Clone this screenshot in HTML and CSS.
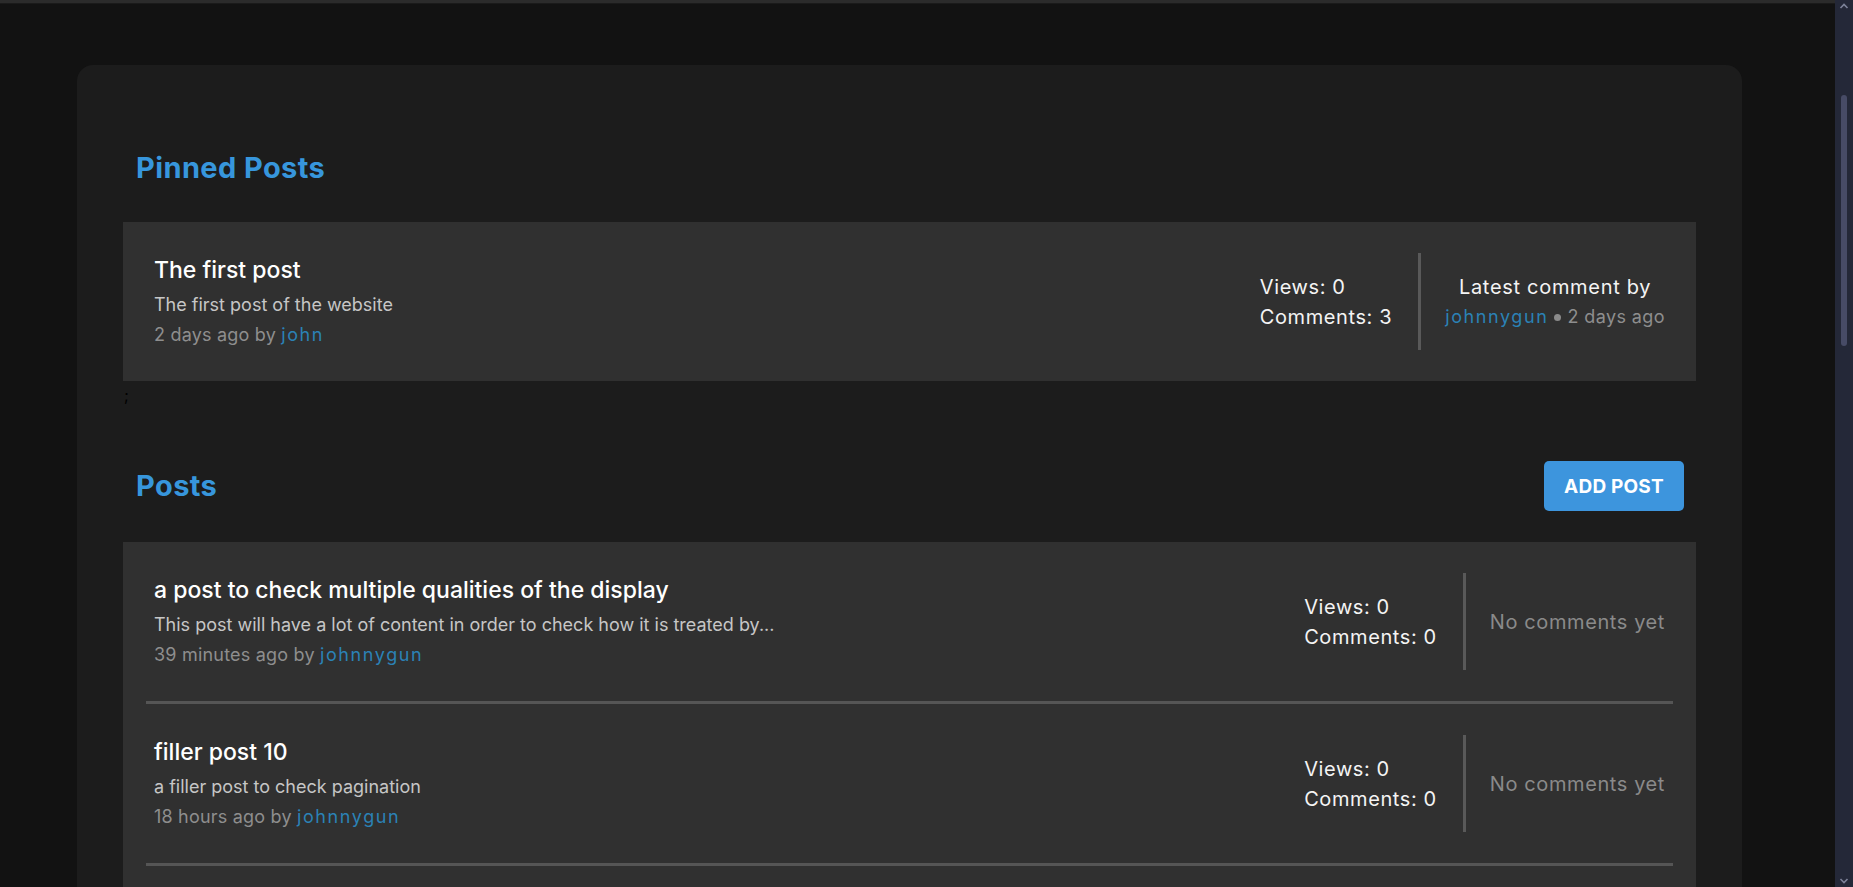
FILE: index.html
```html
<!DOCTYPE html>
<html lang="en">
<head>
<meta charset="utf-8">
<title>Forum</title>
<link rel="stylesheet" href="styles.css">
</head>
<body>
<div class="screen">
  <main class="viewport">
    <div class="topbar"></div>
    <div class="panel">
      <h2 class="section-title pinned-title">Pinned Posts</h2>
      <div class="pinned">
        <article class="post">
          <div class="post-main">
            <h3 class="post-title">The first post</h3>
            <p class="post-desc">The first post of the website</p>
            <p class="post-meta">2 days ago by <a class="user">john</a></p>
          </div>
          <div class="post-side">
            <div class="stats"><span>Views: 0</span><span>Comments: 3</span></div>
            <div class="latest">
              <span class="latest-label">Latest comment by</span>
              <span class="latest-meta"><a class="user">johnnygun</a><i class="dot"></i>2 days ago</span>
            </div>
          </div>
        </article>
      </div>
      <div class="stray">;</div>
      <div class="posts-head">
        <h2 class="section-title">Posts</h2>
        <button class="add-btn">ADD POST</button>
      </div>
      <div class="post-list">
        <article class="post post-row">
          <div class="post-main">
            <h3 class="post-title">a post to check multiple qualities of the display</h3>
            <p class="post-desc">This post will have a lot of content in order to check how it is treated by...</p>
            <p class="post-meta">39 minutes ago by <a class="user">johnnygun</a></p>
          </div>
          <div class="post-side">
            <div class="stats"><span>Views: 0</span><span>Comments: 0</span></div>
            <div class="latest"><span class="no-comments">No comments yet</span></div>
          </div>
        </article>
        <article class="post post-row">
          <div class="post-main">
            <h3 class="post-title">filler post 10</h3>
            <p class="post-desc">a filler post to check pagination</p>
            <p class="post-meta">18 hours ago by <a class="user">johnnygun</a></p>
          </div>
          <div class="post-side">
            <div class="stats"><span>Views: 0</span><span>Comments: 0</span></div>
            <div class="latest"><span class="no-comments">No comments yet</span></div>
          </div>
        </article>
      </div>
    </div>
  </main>
  <div class="scrollbar">
    <svg class="sb-arrow" width="18" height="12" viewBox="0 0 18 12"><polyline points="5.5,8 9,4.5 12.5,8" fill="none" stroke="#7d8299" stroke-width="1.6"/></svg>
    <div class="sb-thumb"></div>
    <div class="sb-fill"></div>
    <svg class="sb-arrow" width="18" height="12" viewBox="0 0 18 12"><polyline points="5.5,4 9,7.5 12.5,4" fill="none" stroke="#7d8299" stroke-width="1.6"/></svg>
  </div>
</div>
</body>
</html>
```

FILE: styles.css
```css
* { box-sizing: border-box; }

html, body {
  margin: 0;
  padding: 0;
  height: 100%;
  background: #121212;
  font-family: Inter, "Noto Sans", sans-serif;
  color: #f2f2f2;
}

.screen {
  display: flex;
  height: 887px;
  overflow: hidden;
}

.viewport {
  flex: 1;
  min-width: 0;
  overflow: hidden;
  background: #121212;
}

.topbar {
  height: 4px;
  background: #2b2b2b;
  border-bottom: 1px solid #1a1a1a;
}

.panel {
  margin: 61px 0 0 77px;
  width: 1665px;
  min-height: 900px;
  padding: 83px 46px 0;
  background: #1c1c1c;
  border-radius: 16px 16px 0 0;
}

.section-title {
  margin: 0;
  font-size: 29px;
  line-height: 40px;
  font-weight: 700;
  color: #3796dc;
  letter-spacing: 0.4px;
}

.pinned-title {
  padding-left: 13px;
  margin-bottom: 34px;
}

.pinned .post {
  padding: 31px;
  background: #303030;
}

.post {
  display: flex;
  align-items: stretch;
}

.post-main {
  flex: 1;
  min-width: 0;
}

.post-title {
  margin: 0;
  font-size: 23px;
  line-height: 34px;
  font-weight: 500;
  color: #ffffff;
}

.post-desc {
  margin: 3px 0 0;
  font-size: 18px;
  line-height: 30px;
  color: #c6c6c6;
}

.post-meta {
  margin: 0;
  font-size: 18px;
  line-height: 30px;
  color: #8e8e8e;
  letter-spacing: 0.2px;
}

.user {
  color: #2b82b6;
  text-decoration: none;
  letter-spacing: 1.6px;
}

.post-side {
  display: flex;
  align-items: stretch;
}

.stats {
  display: flex;
  flex-direction: column;
  justify-content: center;
  padding-right: 26px;
  font-size: 20px;
  line-height: 30px;
  color: #f4f4f4;
  letter-spacing: 0.6px;
}

.latest {
  display: flex;
  flex-direction: column;
  justify-content: center;
  align-items: center;
  padding-left: 24px;
  border-left: 3px solid #595959;
  text-align: center;
}

.latest-label {
  font-size: 20px;
  line-height: 30px;
  color: #f4f4f4;
  letter-spacing: 0.7px;
}

.latest-meta {
  display: flex;
  align-items: center;
  font-size: 18px;
  line-height: 30px;
  color: #8e8e8e;
  letter-spacing: 0.4px;
}

.latest-meta .user {
  letter-spacing: 1.6px;
}

.dot {
  display: inline-block;
  width: 7px;
  height: 7px;
  border-radius: 50%;
  background: #8a8a8a;
  margin: 2px 6px 0 6px;
}

.no-comments {
  font-size: 20px;
  line-height: 30px;
  color: #8a8a8a;
  letter-spacing: 0.6px;
}

.stray {
  margin-top: 4px;
  height: 20px;
  font-size: 16px;
  line-height: 20px;
  color: #000;
  padding-left: 1px;
}

.posts-head {
  display: flex;
  justify-content: space-between;
  align-items: center;
  height: 50px;
  margin-top: 56px;
  margin-bottom: 31px;
  padding: 0 12px 0 13px;
}

.add-btn {
  width: 140px;
  height: 50px;
  border: none;
  border-radius: 5px;
  background: #3d95dd;
  color: #ffffff;
  font-family: Inter, "Noto Sans", sans-serif;
  font-size: 19px;
  font-weight: 700;
  letter-spacing: 0.2px;
  padding: 0;
}

.post-list {
  background: #303030;
  padding: 0 23px 60px;
}

.post-row {
  padding: 31px 8px;
  border-bottom: 3px solid #555555;
}

.scrollbar {
  width: 18px;
  flex: none;
  display: flex;
  flex-direction: column;
  align-items: center;
  background: #242838;
}

.sb-arrow {
  display: block;
  flex: none;
}

.sb-thumb {
  margin-top: 83px;
  width: 6px;
  height: 251px;
  border-radius: 3px;
  background: #474b66;
  flex: none;
}

.sb-fill {
  flex: 1;
}
```
